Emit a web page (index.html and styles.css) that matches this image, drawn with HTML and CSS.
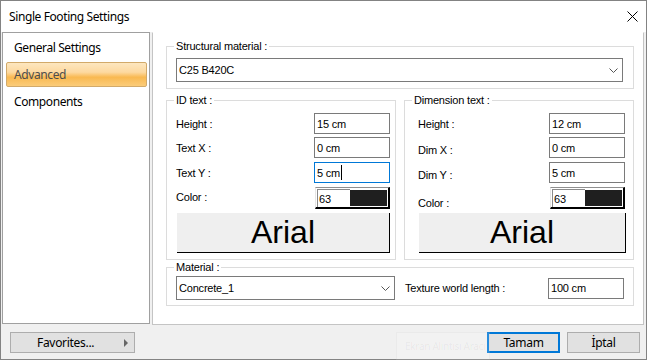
FILE: index.html
```html
<!DOCTYPE html>
<html lang="en">
<head>
    <meta charset="UTF-8">
    <title>Single Footing Settings</title>
    <link rel="stylesheet" href="styles.css">
</head>
<body>
<div class="window">
    <div class="titlebar">
        <span class="title">Single Footing Settings</span>
        <svg class="close" width="11" height="11" viewBox="0 0 11 11">
            <path d="M0.5 0.5 L10.5 10.5 M10.5 0.5 L0.5 10.5" stroke="#000" stroke-width="1" fill="none"/>
        </svg>
    </div>

    <div class="body">
        <ul class="nav">
            <li>General Settings</li>
            <li class="active">Advanced</li>
            <li>Components</li>
        </ul>

        <div class="panel">
            <fieldset class="group group-struct">
                <legend>Structural material :</legend>
                <div class="combo combo-struct">
                    <span>C25 B420C</span>
                    <svg class="chev" width="9" height="5" viewBox="0 0 9 5"><polyline points="0.5,0.5 4.5,4.5 8.5,0.5" fill="none" stroke="#555"/></svg>
                </div>
            </fieldset>

            <div class="pair">
                <!-- yazi ayarlari -->
                <fieldset class="group group-id">
                    <legend>ID text :</legend>
                    <div class="row r1"><span>Height :</span><div class="field">15 cm</div></div>
                    <div class="row r2"><span>Text X :</span><div class="field">0 cm</div></div>
                    <div class="row r3"><span>Text Y :</span><div class="field focus">5 cm<span class="caret"></span></div></div>
                    <div class="row r4"><span class="up">Color :</span>
                        <div class="swatch"><span class="num">63</span><span class="fill"></span></div>
                    </div>
                    <div class="fontbtn">Arial</div>
                </fieldset>

                <fieldset class="group group-dim">
                    <legend>Dimension text :</legend>
                    <div class="row r1"><span>Height :</span><div class="field">12 cm</div></div>
                    <div class="row r2"><span class="down2">Dim X :</span><div class="field">0 cm</div></div>
                    <div class="row r3"><span class="down2">Dim Y :</span><div class="field">5 cm</div></div>
                    <div class="row r4"><span class="down4">Color :</span>
                        <div class="swatch"><span class="num">63</span><span class="fill"></span></div>
                    </div>
                    <div class="fontbtn">Arial</div>
                </fieldset>
            </div>

            <fieldset class="group group-mat">
                <legend>Material :</legend>
                <div class="mat-row">
                    <div class="combo combo-mat">
                        <span>Concrete_1</span>
                        <svg class="chev" width="9" height="5" viewBox="0 0 9 5"><polyline points="0.5,0.5 4.5,4.5 8.5,0.5" fill="none" stroke="#555"/></svg>
                    </div>
                    <span class="tex-label">Texture world length :</span>
                    <div class="field field-tex">100 cm</div>
                </div>
            </fieldset>
        </div>
    </div>

    <div class="footer">
        <div class="btn btn-fav"><span>Favorites...</span><span class="arrow"></span></div>
        <div class="btn btn-ok">Tamam</div>
        <div class="btn btn-cancel">İptal</div>
        <div class="ghost">Ekran Alıntısı Aracı</div>
    </div>
</div>
</body>
</html>
```

FILE: styles.css
```css
* {
    box-sizing: border-box;
}
body {
    margin: 0;
    background: #fff;
    font-family: "Liberation Sans", Arial, sans-serif;
    font-size: 11px;
    letter-spacing: -0.2px;
    color: #000;
}
.window {
    width: 647px;
    height: 360px;
    border: 1px solid #838383;
    background: #f0f0f0;
    display: flex;
    flex-direction: column;
}
.titlebar {
    height: 31px;
    flex: none;
    background: #fff;
    display: flex;
    align-items: center;
    justify-content: space-between;
    padding: 0 8px 0 8px;
    font-family: "Noto Sans", sans-serif;
    font-size: 12px;
    letter-spacing: -0.4px;
}
.body {
    height: 293px;
    flex: none;
    display: flex;
    gap: 2px;
    padding: 0 2px 0 1px;
}
/* sol menu */
.nav {
    list-style: none;
    margin: 0;
    width: 148px;
    height: 292px;
    border: 1px solid #a0a0a0;
    background: #fff;
    padding: 2px 2px 0 3px;
    font-family: "Noto Sans", sans-serif;
    font-size: 12px;
    letter-spacing: -0.4px;
}
.nav li {
    height: 25px;
    margin-bottom: 2px;
    padding-left: 7px;
    display: flex;
    align-items: center;
    border: 1px solid transparent;
}
.nav li.active {
    color: #4d4d4d;
    border-color: #d2aa6a;
    border-radius: 2px;
    background: linear-gradient(to bottom, #fde7c0 0%, #fdd9a0 40%, #f9b951 62%, #fbcc7a 100%);
}
.panel {
    flex: 1;
    border: 1px solid #c4c4c4;
    border-top-color: #fff;
    background: #fff;
    padding: 6px 0 0 13px;
}
fieldset.group {
    margin: 0;
    min-width: 0;
    border: 1px solid #dcdcdc;
}
legend {
    padding: 0 2px;
    margin-left: -2px;
    line-height: 14px;
}
.group-struct {
    width: 468px;
    padding: 0 10px 6px 9px;
}
.combo {
    height: 24px;
    border: 1px solid #7a7a7a;
    background: #fff;
    display: flex;
    align-items: center;
    justify-content: space-between;
    padding: 0 4px 0 2px;
}
.combo-struct {
    margin-top: 5px;
}
.pair {
    display: flex;
    gap: 8px;
    margin-top: 4px;
}
.group-id {
    width: 230px;
    padding: 0 5px 6px 9px;
}
.group-dim {
    width: 230px;
    padding: 0 8px 6px 13px;
}
.group-dim legend {
    margin-left: -6px;
}
.row {
    display: flex;
    align-items: center;
    justify-content: space-between;
    height: 21px;
}
.r1 { margin-top: 6px; }
.r2 { margin-top: 3px; }
.r3 { margin-top: 4px; }
.r4 { margin-top: 4px; height: 22px; }
.up { padding-bottom: 3px; }
.down2 { padding-top: 4px; }
.down4 { padding-top: 9px; }
.field {
    width: 76px;
    height: 21px;
    border: 1px solid #7a7a7a;
    background: #fff;
    padding: 0 2px;
    display: flex;
    align-items: center;
}
.field.focus {
    border-color: #0078d7;
}
.caret {
    width: 1px;
    height: 15px;
    background: #000;
    margin-left: 1px;
}
.swatch {
    width: 75px;
    height: 22px;
    display: flex;
    border-style: solid;
    border-width: 1px 2px 2px 1px;
    border-color: #8f8f8f #000 #000 #e6e6e6;
    padding: 1px 0 0 1px;
    background: #fff;
}
.swatch .num {
    width: 33px;
    border: 1px solid #8a8a8a;
    border-right: none;
    border-bottom: none;
    padding-left: 1px;
    display: flex;
    align-items: center;
}
.swatch .fill {
    flex: 1;
    background: #1f1f1f;
    margin: 1px 1px 1px 0;
}
.fontbtn {
    height: 40px;
    margin: 4px 0 0 1px;
    background: #efefef;
    border-right: 1px solid #000;
    border-bottom: 1px solid #000;
    font-size: 32px;
    letter-spacing: 0;
    display: flex;
    align-items: center;
    justify-content: center;
}
.group-dim .fontbtn {
    margin-right: -1px;
}
.group-mat {
    width: 468px;
    margin-top: 1px;
    padding: 0 9px 5px 9px;
}
.mat-row {
    display: flex;
    align-items: center;
    margin-top: 2px;
}
.combo-mat {
    width: 219px;
}
.tex-label {
    margin-left: 10px;
}
.field-tex {
    margin-left: auto;
}
/* alt butonlar */
.footer {
    position: relative;
    height: 34px;
    flex: none;
    display: flex;
    align-items: flex-start;
    padding: 7px 6px 0 9px;
    font-family: "Noto Sans", sans-serif;
    font-size: 12px;
    letter-spacing: -0.3px;
}
.btn {
    height: 21px;
    background: #e1e1e1;
    border: 1px solid #adadad;
    display: flex;
    align-items: center;
    justify-content: center;
}
.btn-fav {
    width: 125px;
    justify-content: space-between;
    padding: 0 6px 0 26px;
}
.arrow {
    width: 0;
    height: 0;
    border-top: 4px solid transparent;
    border-bottom: 4px solid transparent;
    border-left: 4px solid #666;
}
.btn-ok {
    width: 73px;
    margin-left: auto;
    border: 2px solid #0078d7;
}
.btn-cancel {
    width: 73px;
    margin-left: 7px;
}
.ghost {
    position: absolute;
    left: 395px;
    top: 7px;
    height: 28px;
    display: flex;
    align-items: center;
    padding: 0 4px 0 8px;
    border: 1px solid rgba(0, 0, 0, 0.03);
    background: rgba(255, 255, 255, 0.15);
    color: rgba(0, 0, 0, 0.05);
    font-size: 10px;
    letter-spacing: -0.3px;
    white-space: nowrap;
    pointer-events: none;
}
```
